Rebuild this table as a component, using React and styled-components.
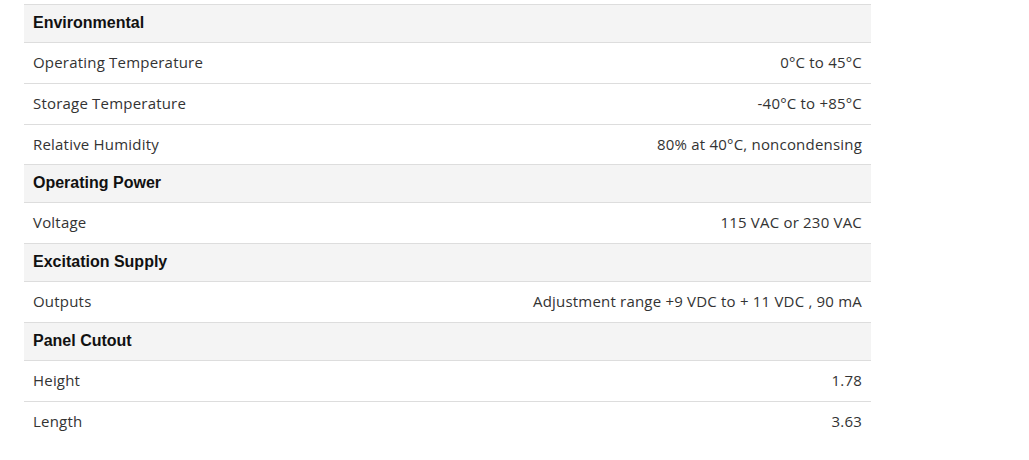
import styled, { createGlobalStyle } from "styled-components";

const GlobalStyle = createGlobalStyle`
    body {
        margin: 0;
        background: #fff;
    }
`

const Pagina = styled.div`
    padding: 4px 158px 0 24px;
`

const TabelaEstilizada = styled.table`
    width: 847px;
    border-collapse: collapse;
    font-family: "Open Sans", sans-serif;
    font-size: 15px;
    letter-spacing: 0.2px;
    color: #333;
`

const CabecalhoGrupo = styled.th`
    background-color: #f4f4f4;
    border-top: 1px solid #dddddd;
    text-align: left;
    font-family: "Liberation Sans", Arial, sans-serif;
    font-size: 16px;
    font-weight: bold;
    letter-spacing: 0;
    color: #111;
    padding: 9px 9px 10px;
    line-height: 18px;
`

const Celula = styled.td`
    border-top: 1px solid #dddddd;
    padding: 10px 9px;
    line-height: 19.75px;
    text-align: ${(props) => (props.$direita ? "right" : "left")};
`

const grupos = [
    {
        titulo: "Environmental",
        linhas: [
            ["Operating Temperature", "0°C to 45°C"],
            ["Storage Temperature", "-40°C to +85°C"],
            ["Relative Humidity", "80% at 40°C, noncondensing"],
        ],
    },
    {
        titulo: "Operating Power",
        linhas: [["Voltage", "115 VAC or 230 VAC"]],
    },
    {
        titulo: "Excitation Supply",
        linhas: [["Outputs", "Adjustment range +9 VDC to + 11 VDC , 90 mA"]],
    },
    {
        titulo: "Panel Cutout",
        linhas: [
            ["Height", "1.78"],
            ["Length", "3.63"],
        ],
    },
]

export default function App() {
    return (
        <>
            <GlobalStyle />
            <Pagina>
                <TabelaEstilizada>
                    {grupos.map((grupo) => (
                        <tbody key={grupo.titulo}>
                            <tr>
                                <CabecalhoGrupo colSpan={2}>{grupo.titulo}</CabecalhoGrupo>
                            </tr>
                            {grupo.linhas.map(([nome, valor]) => (
                                <tr key={nome}>
                                    <Celula>{nome}</Celula>
                                    <Celula $direita>{valor}</Celula>
                                </tr>
                            ))}
                        </tbody>
                    ))}
                </TabelaEstilizada>
            </Pagina>
        </>
    );
}
